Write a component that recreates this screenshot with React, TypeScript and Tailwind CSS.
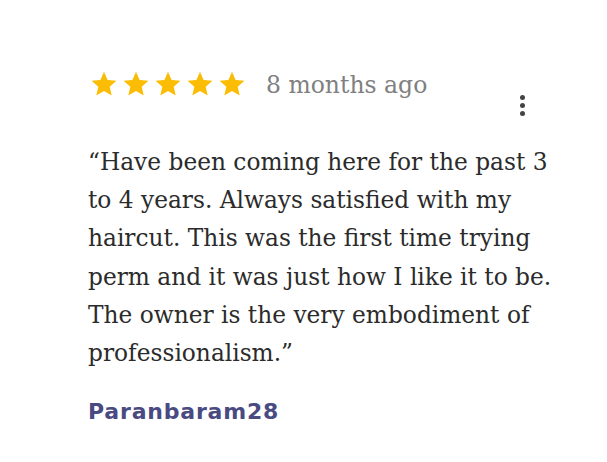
const lines = [
  '“Have been coming here for the past 3',
  'to 4 years. Always satisfied with my',
  'haircut. This was the first time trying',
  'perm and it was just how I like it to be.',
  'The owner is the very embodiment of',
  'professionalism.”',
];

function Star() {
  return (
    <svg width="28" height="28" viewBox="0 0 24 24" className="shrink-0">
      <path
        fill="#fbbc04"
        d="M12 1.6l3.05 7.02 7.6.68-5.76 5.03 1.7 7.45L12 17.9l-6.59 3.88 1.7-7.45L1.35 9.3l7.6-.68z"
      />
    </svg>
  );
}

export default function App() {
  return (
    <div className="w-[607px] h-[462px] bg-white pl-[88px] pt-[68px] font-['DejaVu_Serif',serif]">
      <div className="flex items-start justify-between w-[437px]">
        <div className="flex items-center h-[32px]">
          <div className="flex gap-[4px] ml-[2px]">
            {[0, 1, 2, 3, 4].map((i) => (
              <Star key={i} />
            ))}
          </div>
          <span className="ml-[20px] mt-[4px] text-[23.5px] text-[#808080] leading-none">8 months ago</span>
        </div>
        <div className="flex flex-col gap-[3px] mt-[27px] items-center">
          <span className="w-[5px] h-[5px] rounded-full bg-[#444]" />
          <span className="w-[5px] h-[5px] rounded-full bg-[#444]" />
          <span className="w-[5px] h-[5px] rounded-full bg-[#444]" />
        </div>
      </div>

      <p className="mt-[27px] text-[23.3px] leading-[38.2px] text-[#2b2b2b]">
        {lines.map((l) => (
          <span key={l} className="block whitespace-nowrap">{l}</span>
        ))}
      </p>

      <div className="mt-[29px] text-[22px] font-bold tracking-[0.8px] text-[#4a4a82] font-['DejaVu_Sans',sans-serif] leading-none">
        Paranbaram28
      </div>
    </div>
  );
}
